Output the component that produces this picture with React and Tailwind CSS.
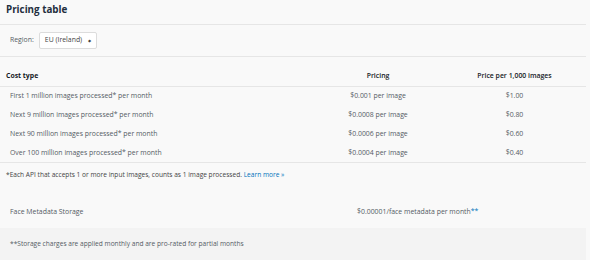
export default function App() {
  const rows = [
    ['First 1 million images processed* per month', '$0.001 per image', '$1.00'],
    ['Next 9 million images processed* per month', '$0.0008 per image', '$0.80'],
    ['Next 90 million images processed* per month', '$0.0006 per image', '$0.60'],
    ['Over 100 million images processed* per month', '$0.0004 per image', '$0.40'],
  ];

  return (
    <div className="w-[590px] h-[260px] overflow-hidden bg-[#f9f9f9] text-[#545b64] font-['Open_Sans',sans-serif]">
      <div className="pr-[4px]">
        <h2 className="px-[6px] h-[25px] flex items-center pb-[3px] text-[9.8px] font-bold text-[#232f3e] border-b border-[#e6e6e6]">
          Pricing table
        </h2>

        {/* Region selector */}
        <div className="h-[32px] flex items-center px-[10px] border-b border-[#e6e6e6] text-[6.9px]">
          <span className="mr-[5px]">Region:</span>
          <div className="flex items-center gap-[6px] whitespace-nowrap h-[17px] px-[5px] bg-white border border-[#dcdcdc] rounded-[2px] text-[#444]">
            EU (Ireland)
            <span className="text-[4px]">&#9670;</span>
          </div>
        </div>

        {/* Table */}
        <div className="mt-[10px] grid grid-cols-[293px_170px_123px] text-[6.9px]">
          <div className="h-[20px] flex items-center px-[6px] font-bold text-[#16191f] border-b border-[#e6e6e6]">Cost type</div>
          <div className="h-[20px] flex items-center justify-center font-semibold text-[#16191f] border-b border-[#e6e6e6]">Pricing</div>
          <div className="h-[20px] flex items-center justify-center pr-[20px] font-semibold text-[#16191f] border-b border-[#e6e6e6]">Price per 1,000 images</div>
          {rows.map((r, i) => (
            <div key={i} className="contents">
              <div className={`h-[19px] flex items-center px-[10px] ${i === 3 ? 'border-b border-[#e6e6e6]' : ''}`}>{r[0]}</div>
              <div className={`h-[19px] flex items-center justify-center ${i === 3 ? 'border-b border-[#e6e6e6]' : ''}`}>{r[1]}</div>
              <div className={`h-[19px] flex items-center justify-center pr-[20px] ${i === 3 ? 'border-b border-[#e6e6e6]' : ''}`}>{r[2]}</div>
            </div>
          ))}
        </div>

        <p className="mt-[7px] h-[10px] leading-[10px] px-[6px] text-[6.6px] text-[#444]">
          *Each API that accepts 1 or more input images, counts as 1 image processed.{' '}
          <a href="#" className="text-[#0073bb]">Learn more »</a>
        </p>

        <div className="mt-[16px] h-[32px] flex items-center text-[6.9px]">
          <div className="w-[357px] px-[10px]">Face Metadata Storage</div>
          <div>$0.00001/face metadata per month<span className="text-[#0073bb]">**</span></div>
        </div>

        <div className="h-[32px] flex items-center px-[10px] bg-[#f3f3f3] text-[6.6px]">
          **Storage charges are applied monthly and are pro-rated for partial months
        </div>
      </div>
    </div>
  );
}
